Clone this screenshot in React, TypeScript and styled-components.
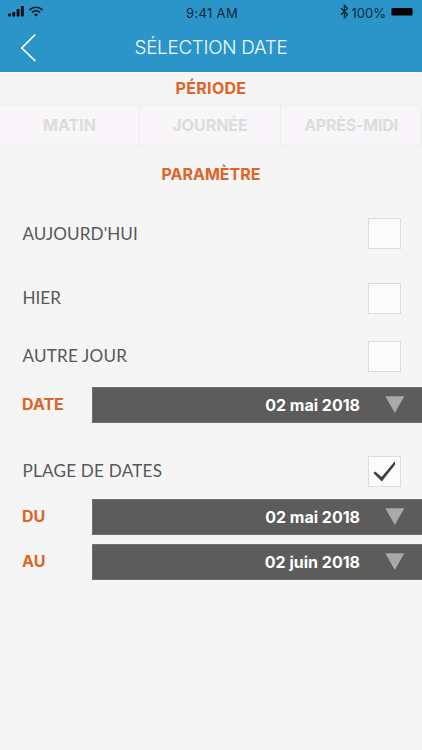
import React from 'react';
import styled, { createGlobalStyle } from 'styled-components';

const Global = createGlobalStyle`
  * { box-sizing: border-box; }
  body { margin: 0; background: #f5f5f5; }
`;

const Screen = styled.main`
  width: 422px;
  height: 750px;
  overflow: hidden;
  background: #f5f5f5;
  color: #585858;
  font-family: Lato, sans-serif;
`;

const Header = styled.header`
  height: 73px;
  background: #2b95c9;
  border-bottom: 1px solid #fcfdfd;
`;

const StatusBar = styled.div`
  height: 24px;
  padding: 0 6px 0 7px;
  display: grid;
  grid-template-columns: 1fr auto 1fr;
  align-items: center;
  color: #0c2836;
  font: 400 13px/22px Inter, sans-serif;
`;

const StatusGroup = styled.div<{ $end?: boolean }>`
  display: flex;
  align-items: center;
  justify-content: ${p => (p.$end ? 'flex-end' : 'flex-start')};
`;

const Clock = styled.span`
  letter-spacing: 0.36px;
  padding: 2px 0 0 1px;
  display: block;
`;

const Charge = styled.span`
  margin: 0 5px 0 3px;
  padding-top: 2px;
`;

const NavBar = styled.div`
  height: 48px;
  display: grid;
  grid-template-columns: 60px 1fr 60px;
  align-items: center;
`;

const BackButton = styled.button`
  width: 20px;
  height: 32px;
  margin: -2px 0 0 19px;
  padding: 0;
  border: 0;
  background: none;
  svg { display: block; }
`;

const Title = styled.h1`
  margin: 0;
  color: #f4fbff;
  text-align: center;
  font: 300 18.8px/46px Inter, sans-serif;
  letter-spacing: -0.24px;
`;

const SectionTitle = styled.h2<{ $height: number; $lift?: number; $spacing?: number }>`
  height: ${p => p.$height}px;
  margin: 0;
  padding-bottom: ${p => p.$lift ?? 0}px;
  display: flex;
  align-items: center;
  justify-content: center;
  color: #de6427;
  font: 700 16px Inter, sans-serif;
  letter-spacing: ${p => p.$spacing ?? 0}px;
`;

const Tabs = styled.div`
  height: 41px;
  margin-bottom: 8px;
  display: grid;
  grid-template-columns: 140px 141px 141px;
  background: #f8f6f8;
  border: solid #f0eff0;
  border-width: 1px 0;
`;

const Tab = styled.button<{ $spacing?: number }>`
  padding: 0 0 1px;
  border: 0;
  border-right: 1px solid #eeedee;
  background: none;
  color: #dddcdd;
  font: 700 16px Inter, sans-serif;
  letter-spacing: ${p => p.$spacing ?? 0}px;
`;

const OptionRow = styled.label<{ $gap: number }>`
  height: 31px;
  margin-top: ${p => p.$gap}px;
  padding: 0 21px 0 22px;
  display: flex;
  align-items: center;
  justify-content: space-between;
`;

const OptionName = styled.span<{ $spacing: number; $lift: number }>`
  padding: 0 0 ${p => p.$lift * 2}px 0.5px;
  font-size: 17.1px;
  line-height: 20px;
  letter-spacing: ${p => p.$spacing}px;
`;

const Box = styled.span`
  width: 33px;
  height: 31px;
  display: grid;
  place-items: center;
  background: #fbfbfb;
  border: 1px solid #dcdcdc;
`;

const DateRow = styled.div<{ $gap: number }>`
  height: 36px;
  margin-top: ${p => p.$gap}px;
  display: grid;
  grid-template-columns: 92px 1fr;
`;

const DateName = styled.span`
  padding-left: 22px;
  color: #de6427;
  font: 700 16px/34px Inter, sans-serif;
`;

const DateField = styled.div`
  padding-right: 17px;
  display: flex;
  align-items: center;
  justify-content: flex-end;
  gap: 25px;
  background: #5c5c5c;
  border: 1px solid #717171;
  border-right: 0;
  color: #fff;
  font: 700 16px/34px Inter, sans-serif;
`;

interface OptionProps {
  name: string;
  gap: number;
  spacing: number;
  lift?: number;
  checked?: boolean;
}

const Option = ({ name, gap, spacing, lift = 1, checked }: OptionProps) => (
  <OptionRow $gap={gap}>
    <OptionName $spacing={spacing} $lift={lift}>{name}</OptionName>
    <Box>
      {checked && (
        <svg width="25" height="23" viewBox="0 0 25 23">
          <path d="M1.4 13 L3.2 11.4 L9.6 17 L22.8 1.3 L23.2 4.6 L9.8 21.4Z" fill="#3f3f3f" />
        </svg>
      )}
    </Box>
  </OptionRow>
);

const DateLine = ({ name, value, gap }: { name: string; value: string; gap: number }) => (
  <DateRow $gap={gap}>
    <DateName>{name}</DateName>
    <DateField>
      <span>{value}</span>
      <svg width="20" height="18" viewBox="0 0 20 18">
        <path d="M0.3 0.3H19.3L9.8 17Z" fill="#a9a9a9" />
      </svg>
    </DateField>
  </DateRow>
);

export default function App() {
  return (
    <Screen>
      <Global />
      <Header>
        <StatusBar>
          <StatusGroup>
            <svg width="38" height="14" viewBox="0 0 38 14" fill="#04141d">
              <rect x="1" y="8.5" width="3" height="3" rx="0.7" />
              <rect x="5.3" y="7" width="3" height="4.5" rx="0.7" />
              <rect x="9.6" y="4" width="3" height="7.5" rx="0.7" />
              <rect x="13.9" y="1" width="3" height="10.5" rx="0.7" />
              <g fill="none" stroke="#04141d" strokeWidth="1.6">
                <path d="M22.6 4.8a9.5 9.5 0 0 1 12.8 0" />
                <path d="M24.9 7.4a6 6 0 0 1 8.2 0" />
              </g>
              <path d="M26.8 9.4a3.3 3.3 0 0 1 4.4 0L29 11.6Z" />
            </svg>
          </StatusGroup>
          <Clock>9:41 AM</Clock>
          <StatusGroup $end>
            <svg width="9" height="17" viewBox="0 0 9 17" fill="none" stroke="#0a2431" strokeWidth="1.3">
              <path d="M1 4.2 7.5 10.5 4.4 13.6V1.3L7.5 4.4 1 10.7" />
            </svg>
            <Charge>100%</Charge>
            <svg width="25" height="11" viewBox="0 0 25 11">
              <rect x="0.5" y="1" width="21" height="7.6" rx="1.2" />
              <path d="M23.5 3.3v3" stroke="#257da8" />
            </svg>
          </StatusGroup>
        </StatusBar>
        <NavBar>
          <BackButton aria-label="Retour">
            <svg width="20" height="32" viewBox="0 0 20 32" fill="none" stroke="#fff" strokeWidth="1.7">
              <path d="M16.3 3.5 2.8 17 16.3 30" />
            </svg>
          </BackButton>
          <Title>SÉLECTION DATE</Title>
        </NavBar>
      </Header>

      <SectionTitle $height={32} $lift={2} $spacing={0.3}>PÉRIODE</SectionTitle>
      <Tabs>
        <Tab>MATIN</Tab>
        <Tab>JOURNÉE</Tab>
        <Tab $spacing={-0.22}>APRÈS-MIDI</Tab>
      </Tabs>
      <SectionTitle $height={40}>PARAMÈTRE</SectionTitle>

      <Option name="AUJOURD'HUI" gap={24} spacing={0.08} lift={0} />
      <Option name="HIER" gap={34} spacing={0} />
      <Option name="AUTRE JOUR" gap={27} spacing={0.2} />
      <DateLine name="DATE" value="02 mai 2018" gap={15} />
      <Option name="PLAGE DE DATES" gap={33} spacing={0.22} checked />
      <DateLine name="DU" value="02 mai 2018" gap={12} />
      <DateLine name="AU" value="02 juin 2018" gap={9} />
    </Screen>
  );
}
